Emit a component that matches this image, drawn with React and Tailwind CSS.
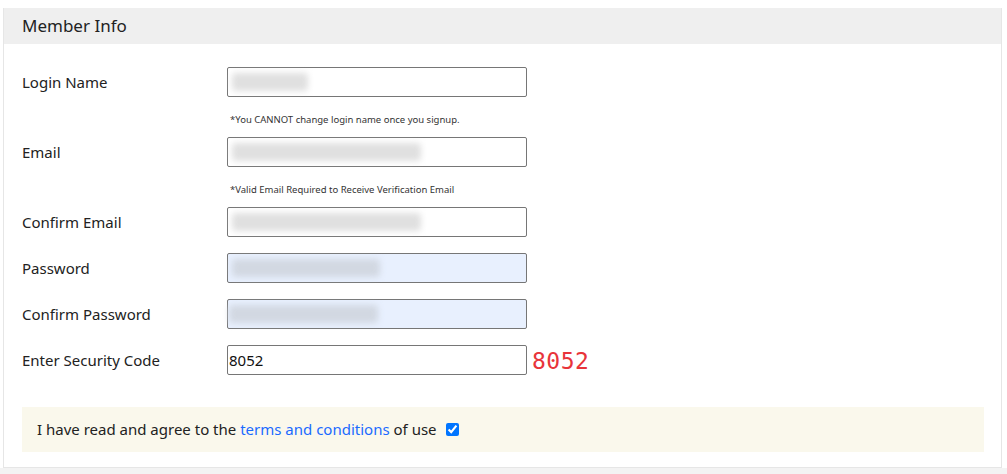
import React from 'react';

const font = { fontFamily: '"Noto Sans", "Open Sans", sans-serif' };

function BlurBox({ width, autofill = false, offset = 'ml-[4px]' }) {
  return (
    <div
      className={`h-[30px] w-[300px] rounded-[2px] border border-[#767676] flex items-center ${
        autofill ? 'bg-[#e8f0fe]' : 'bg-white'
      }`}
    >
      <span
        className={`${offset} h-[18px] rounded-sm blur-[3px] ${autofill ? 'bg-[#d2d8e2]' : 'bg-[#e0e0e0]'}`}
        style={{ width }}
      />
    </div>
  );
}

function Row({ label, children, note }) {
  return (
    <div className="flex flex-col">
      <div className="flex items-center">
        <label className="w-[205px] shrink-0 text-[15px] text-[#222]">{label}</label>
        {children}
      </div>
      {note && <p className="ml-[208px] mt-[17px] mb-[11px] text-[9.5px] leading-[12px] text-[#333]">{note}</p>}
    </div>
  );
}

export default function App() {
  return (
    <div className="w-[1007px] h-[474px] bg-white pt-[8px]" style={font}>
      <div className="ml-[3px] w-[999px] border border-[#e6e6e6] border-t-0 bg-white">
        <div className="h-[36px] bg-[#efefef] flex items-center pl-[18px]">
          <h2 className="text-[17px] text-[#222]">Member Info</h2>
        </div>
        <div className="pl-[18px] pr-[17px] pt-[23px] pb-[15px]">
          <div className="flex flex-col gap-[16px]">
            <div className="flex flex-col">
              <Row label="Login Name" note="*You CANNOT change login name once you signup.">
                <BlurBox width={76} />
              </Row>
              <Row label="Email" note="*Valid Email Required to Receive Verification Email">
                <BlurBox width={189} />
              </Row>
              <Row label="Confirm Email">
                <BlurBox width={189} />
              </Row>
            </div>
            <Row label="Password">
              <BlurBox width={148} autofill />
            </Row>
            <Row label="Confirm Password">
              <BlurBox width={149} autofill offset="ml-[1px]" />
            </Row>
            <Row label="Enter Security Code">
              <div className="flex items-center">
                <input
                  type="text"
                  defaultValue="8052"
                  className="h-[30px] w-[300px] rounded-[2px] border border-[#767676] bg-white px-[1px] text-[15px] text-[#111] outline-none"
                  style={font}
                />
                <span
                  className="ml-[5px] mt-[2px] text-[23px] leading-none tracking-[0.5px] text-[#e8343a]"
                  style={{ fontFamily: '"DejaVu Sans Mono", "Liberation Mono", monospace' }}
                >
                  8052
                </span>
              </div>
            </Row>
          </div>
          <div className="mt-[32px] h-[45px] bg-[#faf8ec] flex items-center pl-[15px]">
            <span className="text-[15px] text-[#222]">
              I have read and agree to the{' '}
              <a href="#" className="text-[#1a6bff]">terms and conditions</a> of use
            </span>
            <input type="checkbox" defaultChecked className="ml-[9px] h-[13px] w-[13px] accent-[#0075ff]" />
          </div>
        </div>
      </div>
      <div className="h-[8px] bg-[#f3f3f3]" />
    </div>
  );
}
